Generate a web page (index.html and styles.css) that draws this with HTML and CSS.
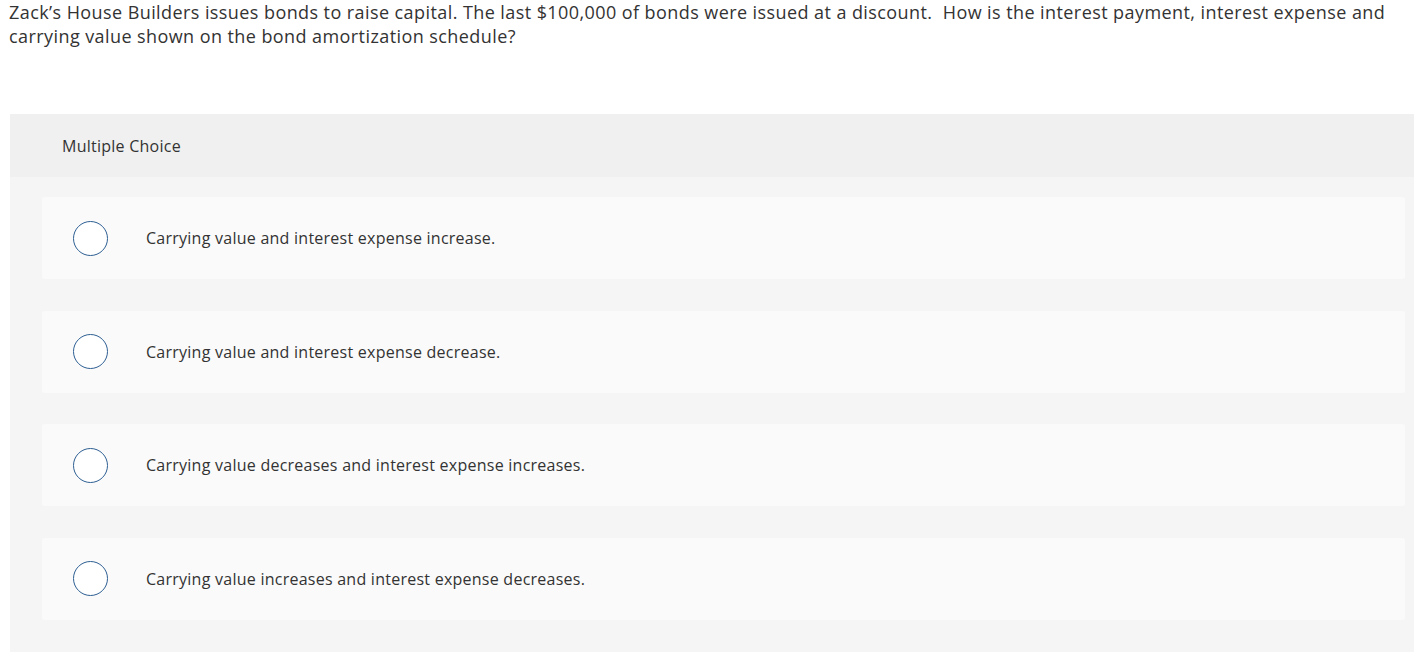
FILE: index.html
```html
<!DOCTYPE html>
<html>
<head>
<meta charset="utf-8">
<link rel="stylesheet" href="styles.css">
</head>
<body>
<p class="question">Zack’s House Builders issues bonds to raise capital. The last $100,000 of bonds were issued at a discount.&nbsp; How is the interest payment, interest expense and carrying value shown on the bond amortization schedule?</p>
<section class="panel">
  <div class="panel-head">Multiple Choice</div>
  <div class="panel-body">
    <div class="option"><span class="radio"></span><span class="label">Carrying value and interest expense increase.</span></div>
    <div class="option"><span class="radio"></span><span class="label">Carrying value and interest expense decrease.</span></div>
    <div class="option"><span class="radio"></span><span class="label">Carrying value decreases and interest expense increases.</span></div>
    <div class="option"><span class="radio"></span><span class="label">Carrying value increases and interest expense decreases.</span></div>
  </div>
</section>
</body>
</html>
```
FILE: styles.css
```css
html, body {
  margin: 0;
  padding: 0;
  background: #ffffff;
  overflow: hidden;
}
body {
  font-family: "Open Sans", "Liberation Sans", sans-serif;
  color: #333333;
}
.question {
  margin: 0 12px 0 9px;
  font-size: 18px;
  letter-spacing: 0.42px;
  line-height: 24px;
  color: #333333;
}
.panel {
  margin: 66px 0 0 10px;
}
.panel-head {
  height: 63px;
  background: #f0f0f0;
  display: flex;
  align-items: center;
  padding-left: 52px;
  font-size: 16px;
  letter-spacing: 0.25px;
  color: #333333;
}
.panel-body {
  background: #f5f5f5;
  padding: 20px 9px 40px 32px;
  display: flex;
  flex-direction: column;
  gap: 31.5px;
}
.option {
  height: 82px;
  background: #fafafa;
  border-radius: 3px;
  display: flex;
  align-items: center;
  padding-left: 31px;
}
.radio {
  box-sizing: border-box;
  width: 35px;
  height: 35px;
  border: 1px solid #2e5f93;
  border-radius: 50%;
  background: #ffffff;
  flex: none;
}
.label {
  margin-left: 38px;
  font-size: 16px;
  letter-spacing: 0.25px;
  color: #333333;
}
```
